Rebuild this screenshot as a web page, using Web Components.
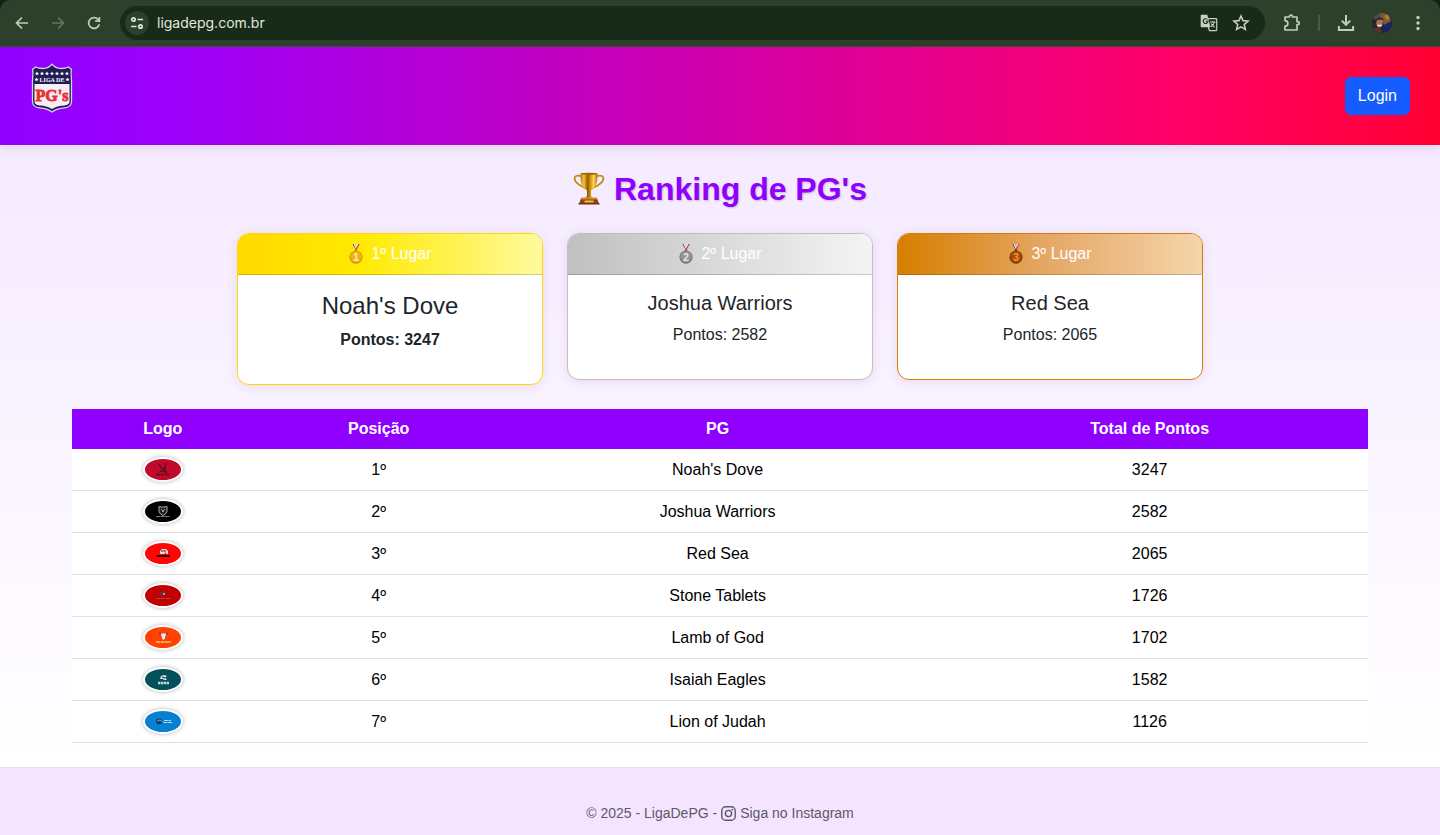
<!DOCTYPE html>
<html lang="pt-BR">
<head>
<meta charset="utf-8">
<title>Liga de PG's</title>
<style>
  html, body { margin: 0; }
  body { font-family: "Liberation Sans", Arial, sans-serif; font-size: 16px; line-height: 24px; color: #212529; }
</style>
</head>
<body>
<liga-app></liga-app>
<script>
const define = (name, html, after) => {
  const tpl = document.createElement('template');
  tpl.innerHTML = html;
  customElements.define(name, class extends HTMLElement {
    connectedCallback() {
      if (this.shadowRoot) return;
      this.attachShadow({ mode: 'open' }).append(tpl.content.cloneNode(true));
      if (after) after(this, this.shadowRoot);
    }
  });
};

/* ---------- browser toolbar ---------- */
define('browser-bar', `
<style>
  :host { display: block; background: #10200f; }
  .bar { display: flex; align-items: center; box-sizing: border-box; height: 47px; padding: 0 4px; background: #2c402b; border-bottom: 1px solid #3c4e3a; border-radius: 10px 10px 0 0; }
  button { display: flex; align-items: center; justify-content: center; flex: none; width: 28px; height: 28px; margin: 0 4px; padding: 0; border: 0; border-radius: 50%; background: none; color: #b9d2b5; }
  button[disabled] { color: #627a60; }
  .pill { display: flex; align-items: center; flex: 1; min-width: 0; height: 34px; margin: 0 9px 0 8px; padding: 0 8px 0 5px; border-radius: 17px; background: #182b19; }
  .pill button { margin: 0 2px; color: #c5cfc2; }
  .pill .site { width: 24px; height: 24px; margin: 0 8px 0 0; background: #2c402b; color: #dce5d9; }
  input { flex: 1; min-width: 0; padding: 0; border: 0; outline: 0; background: none; color: #e2e8df; font: 14px/20px Inter, sans-serif; }
  .rule { width: 2px; height: 16px; margin: 0 8px; background: #465d45; }
  svg { display: block; fill: none; stroke: currentColor; stroke-width: 1.7; }
</style>
<div class="bar">
  <button aria-label="Voltar"><svg width="16" height="16" viewBox="0 0 16 16"><path d="M14 8H3M8 2.5 2.5 8 8 13.5"/></svg></button>
  <button aria-label="Avançar" disabled><svg width="16" height="16" viewBox="0 0 16 16"><path d="M2 8h11M8 2.5 13.5 8 8 13.5"/></svg></button>
  <button aria-label="Recarregar"><svg width="16" height="16" viewBox="0 0 16 16"><path d="M13.3 9.3A5.4 5.4 0 1 1 12 4.3l1.2 1.3"/><path d="M13.4 2v4.1H9.2"/></svg></button>
  <div class="pill">
    <button class="site" aria-label="Informações do site"><svg width="16" height="16" viewBox="0 0 16 16" stroke-width="1.5"><circle cx="4.5" cy="4.5" r="1.7"/><path d="M8.5 4.5h5.500M2 11.5h5.500"/><circle cx="11.5" cy="11.500" r="1.7"/></svg></button>
    <input aria-label="Endereço" value="ligadepg.com.br" spellcheck="false">
    <button aria-label="Traduzir"><svg width="18" height="18" viewBox="0 0 18 18"><path d="M7.500 4.700H16a.7.7 0 0 1 .7.7v10.600a.7.7 0 0 1-.7.7H9.500L8.300 13" stroke-width="1.200"/><path d="M1.500.8h5.800l3.200 12.400H1.500a.8.8 0 0 1-.8-.8V1.600a.8.8 0 0 1 .8-.8z" fill="currentColor" stroke="none"/><path d="M7.300 5.400a2.400 2.400 0 1 0 .7 1.800H5.700" stroke="#182b19" stroke-width="1.100"/><path d="M10 8h5.700M12.800 7v1M14.500 8c-.4 2-1.700 3.500-3.500 4.700M11.300 9.500c.6 1.500 1.800 2.800 3.400 3.700" stroke-width="1.100"/></svg></button>
    <button aria-label="Favoritos"><svg width="18" height="18" viewBox="0 0 16 16"><path stroke-width="1.400" d="m8 1.800 1.800 4.100 4.500.4-3.400 3 1 4.400L8 11.400l-3.900 2.300 1-4.400-3.400-3 4.500-.4z"/></svg></button>
  </div>
  <button aria-label="Extensões"><svg width="20" height="20" viewBox="0 0 20 20"><path d="M3 4h4.500V3.200q0-1.200 1.500-1.200t1.500 1.200V4H15v4.700h.8q1.500 0 1.500 1.500t-1.500 1.500H15V17H3v-3.800c3.800-.2 3.800-5.400 0-5.600z" stroke-linejoin="round"/></svg></button>
  <span class="rule"></span>
  <button aria-label="Downloads"><svg width="18" height="18" viewBox="0 0 18 18"><path d="M9 1v9.500M4.800 6.600 9 10.800l4.200-4.200M1.900 12v4.100h14.200V12" stroke-width="2"/></svg></button>
  <button aria-label="Perfil"><svg width="20" height="20" viewBox="0 0 20 20" stroke="none"><defs><clipPath id="c"><circle cx="10" cy="10" r="10"/></clipPath></defs><g clip-path="url(#c)" stroke="none"><path fill="#29242b" d="M0 0h20v20H0z"/><path fill="#7a5c34" d="M7 0h9l3 8-6 4-5-5z"/><path fill="#454e5c" d="m1 4 5-4 3 3-6 4z"/><ellipse cx="7.500" cy="10" rx="3.200" ry="4.200" fill="#a8705c"/><path fill="#3d2722" d="M4 8c0-4 7-5 7.500-1L7.500 6.500z"/><path d="M5.500 12q2 1.500 4 0" stroke="#f0dcd0"/><path fill="#b8743a" d="m12 3 4-2 2 5-3 1z"/><path fill="#152464" d="m11 14 4-4 5-1v11h-9z"/><path fill="#5c3427" d="m2 15 6-1 2 6H3z"/></g></svg></button>
  <button aria-label="Menu"><svg width="16" height="16" viewBox="0 0 16 16"><g fill="currentColor" stroke="none"><circle cx="8" cy="2.500" r="1.700"/><circle cx="8" cy="8" r="1.700"/><circle cx="8" cy="13.500" r="1.700"/></g></svg></button>
</div>`);

/* ---------- shield logo ---------- */
define('liga-logo', `
<style>:host { display: block; } svg { display: block; }</style>
<svg width="44" height="50" viewBox="-1 0 44 50" role="img" aria-label="Liga de PG's">
  <path fill="#211c55" stroke="#d9cdec" stroke-width="1.300" d="M21 1.200C23 3.800 25.500 5.200 28.500 5.400c3.500.3 6-.1 9-1.400l3 2.500c-1.200 4 .2 8 0 12v20c0 4-2.500 6-7 6.300-5.500.3-8.500 1-12.500 4.200-4-3.200-7-3.900-12.500-4.200-4.500-.3-7-2.300-7-6.300v-20c-.2-4 1.200-8 0-12L4.500 4c3 1.300 5.500 1.700 9 1.400 3-.2 5.500-1.600 7.500-4.200z"/>
  <path fill="#f5eef5" d="M3.500 21h35v17.500c0 2.600-2 3.600-5 3.900-5.500.4-8.500 1-12.500 3.700-4-2.700-7-3.300-12.500-3.700-3-.3-5-1.300-5-3.900z"/>
  <g id="stars" fill="#fff"></g>
  <text x="21" y="18.800" text-anchor="middle" font-family="Liberation Serif, serif" font-weight="700" font-size="6" fill="#fff">LIGA DE</text>
  <text x="21" y="38" text-anchor="middle" font-family="Liberation Serif, serif" font-weight="700" font-size="16" fill="#e8302e" stroke="#e8302e" stroke-width=".8">PG's</text>
</svg>`, (host, root) => {
  const star = (x, y) => `<path d="m${x} ${y - 2} .6 1.300 1.400.1-1 1 .3 1.400-1.300-.7-1.300.7.3-1.400-1-1 1.400-.1z"/>`;
  root.querySelector('#stars').innerHTML =
    [6, 11, 16, 21, 26, 31, 36].map(x => star(x, 10.5)).join('') + star(5.5, 16.5) + star(36.5, 16.5);
});

define('site-header', `
<style>
  :host { display: flex; align-items: center; justify-content: space-between; padding: 16px 30px; position: relative;
    background: linear-gradient(90deg, #9000ff 0%, #9c00fb 12%, #ff0066 82%, #ff0033 100%); box-shadow: 0 4px 8px rgba(0,0,0,.08); }
  .brand { display: block; padding-bottom: 16px; }
  button { padding: 6px 12px; border: 1px solid #145cff; border-radius: 6px; background: #145cff; color: #fff; font: inherit; cursor: pointer; }
</style>
<a class="brand" href="#"><liga-logo></liga-logo></a>
<button type="button">Login</button>`);

/* ---------- trophy and medals ---------- */
define('trophy-icon', `
<style>:host { display: block; } svg { display: block; }</style>
<svg width="32" height="34" viewBox="0 0 32 34" aria-hidden="true">
  <defs>
    <linearGradient id="g"><stop offset="0" stop-color="#b87a05"/><stop offset=".2" stop-color="#f7c531"/><stop offset=".42" stop-color="#8d5d02"/><stop offset=".6" stop-color="#d99a10"/><stop offset=".78" stop-color="#ffd94f"/><stop offset="1" stop-color="#a86f04"/></linearGradient>
  </defs>
  <g fill="none" stroke="#c08b10" stroke-width="1.700"><path d="M9 4.500C4 2.500 1 4 1.700 7.500 2.500 11.500 7 13.500 12 16"/><path d="M23 4.500c5-2 8-.5 7.300 3C29.500 11.500 25 13.500 20 16"/></g>
  <path fill="url(#g)" d="M7.500 1.500h17c.2 9-1.500 14-6.500 17V22c0 2.500 1 3.800 2.500 5h-9c1.500-1.200 2.500-2.500 2.500-5v-3.500C9 15.500 7.300 10.500 7.500 1.500z"/>
  <ellipse cx="16" cy="1.800" rx="8.500" ry="1.100" fill="#9b6a08"/>
  <path fill="#8a4312" d="M8 26h16l2 6H6z"/><path fill="#d9852b" d="M8.500 25.500h15l.5 2H8z"/><path fill="#f3bd45" d="M11.500 28.500h9v2h-9z"/><path fill="#6e300f" d="M5.500 31h21v1.500h-21z"/>
</svg>`);

define('medal-icon', `
<style>
  :host { display: block; --hi: #f2b01e; --lo: #d98a00; --num: #fff3b8; }
  :host([rank="2"]) { --hi: #949494; --lo: #6d6d6d; --num: #e6e6e6; }
  :host([rank="3"]) { --hi: #a34a16; --lo: #7c3305; --num: #ff9c1a; }
  svg { display: block; }
</style>
<svg width="16" height="20" viewBox="0 0 16 20" aria-hidden="true">
  <path fill="#2531b8" d="M4.500 0h2.200L9 5.500H7.500z"/><path fill="#fff" d="M5.600 0h1.200l2 5H7.700z"/><path fill="#e23a3a" d="M11.800 0H9.400L7.300 5.500h1.500z"/><path fill="#fff" d="m9 0-.8 2.500.5 1L10.200 0z"/>
  <circle cx="8" cy="6.300" r="1.300" fill="var(--lo)"/>
  <circle cx="8" cy="13.200" r="6.500" fill="var(--lo)"/><circle cx="8" cy="12.900" r="5.700" fill="var(--hi)"/>
  <text x="8" y="16.500" text-anchor="middle" font-family="Liberation Sans, sans-serif" font-size="10" font-weight="700" fill="var(--num)"></text>
</svg>`, (host, root) => { root.querySelector('text').textContent = host.getAttribute('rank'); });

define('podium-card', `
<style>
  :host { display: block; --edge: #ffd900; --fill: linear-gradient(90deg, #ffd900, #ffea00 40%, #fffa9e); --size: 20px; --line: 24px; --weight: 400;
    overflow: hidden; border: 1px solid var(--edge); border-radius: 12px; background: #fff; box-shadow: 0 2px 12px rgba(80,0,120,.1); text-align: center; }
  :host([rank="1"]) { --size: 24px; --line: 29px; --weight: 700; }
  :host([rank="2"]) { --edge: #c0c0c0; --fill: linear-gradient(90deg, #c0c0c0, #f4f4f4); }
  :host([rank="3"]) { --edge: #d67f00; --fill: linear-gradient(90deg, #d67f00, #e5a867 50%, #f5d5ab); }
  header { display: flex; align-items: center; justify-content: center; gap: 7px; padding: 8px 16px; color: #fff; background: var(--fill); border-bottom: 1px solid rgba(0,0,0,.18); }
  .body { padding: 16px; }
  h2 { margin: 0 0 8px; font-size: var(--size); line-height: var(--line); font-weight: 400; }
  p { margin: 0 0 16px; font-weight: var(--weight); }
</style>
<header><medal-icon></medal-icon><span></span></header>
<div class="body"><h2><slot></slot></h2><p><slot name="points"></slot></p></div>`, (host, root) => {
  const rank = host.getAttribute('rank');
  root.querySelector('header span').textContent = rank + 'º Lugar';
  const medal = document.createElement('medal-icon');
  medal.setAttribute('rank', rank);
  root.querySelector('medal-icon').replaceWith(medal);
});

/* ---------- team badges ---------- */
const ART = {
  dove: ['#bf0a2b', '<path d="m14 5 2 3 1 2M21 4l-1 4-2 2 3-1M15 13l2-2 2 2M20 10l1 3-2-1" stroke="#5d0c1c" stroke-width="1.400"/><path d="M11 15.500h14" stroke="#5d0c1c" stroke-width="1.300" stroke-dasharray="4 .5"/>'],
  joshua: ['#000', '<path d="M14 5.500q4 1.500 8 0v5q-1 3-4 4-3-1-4-4z" fill="#222" stroke="#aaa"/><path d="m16 8 3 3M20 8l-3 3" stroke="#999"/><path d="M11 15.500h14" stroke="#777" stroke-dasharray="4 .5"/>'],
  red: ['#ff0505', '<path d="M15 11V8l2-2h4l2 2v3h-2V9l-2 2z" fill="#f3dada"/><path d="M16 8h5" stroke="#333"/><path d="M11.500 13h13.500" stroke="#3a0000" stroke-width="2"/>'],
  stone: ['#c00003', '<path d="M15 10.500q0-4 4-4 3 1 3 4l-2-2-2 3z" fill="#703030"/><path d="M19 8v2" stroke="#eee"/><path d="M11 13.500h15" stroke="#a45525" stroke-dasharray="4 .7"/>'],
  lamb: ['#ff4203', '<path d="M15.500 6.500h6l-1 2-.5 3-1.500 1.500-1.500-1.500-.5-3z" fill="#e8edf0"/><path d="M14 6.500h2M21 6.500h2" stroke="#43505d" stroke-width="1.500"/><path d="M11 15H26" stroke="#ffc36c" stroke-width="1.300" stroke-dasharray="4 .5"/>'],
  eagle: ['#03505a', '<path d="m15 10 1-3 3-1 3 1-2 1.500 2 2.500h-3l-1-1z" fill="#d5e2e4"/><path d="m17 8 3 1" stroke="#10252a"/><path d="M13 14h11" stroke="#b9dcdf" stroke-width="2.500" stroke-dasharray="2.500 .5"/>'],
  lion: ['#0681d1', '<circle cx="14" cy="10.500" r="3" fill="#123f75"/><path d="m12 10 3-1 2 2" stroke="#62a9df"/><path d="M19 9.500h7M18.500 11.500h9" stroke="#b5dcf4" stroke-dasharray="4 .5"/>']
};
define('team-badge', `
<style>
  :host { display: inline-block; vertical-align: middle; width: 36px; height: 21px; border: 2px solid #fff; border-radius: 50%; overflow: hidden; box-shadow: 0 0 4px rgba(0,0,0,.3); }
  svg { display: block; width: 100%; height: 100%; }
</style>
<svg viewBox="0 0 36 21" role="img" fill="none"></svg>`, (host, root) => {
  const [colour, art] = ART[host.getAttribute('team')];
  host.style.background = colour;
  root.querySelector('svg').innerHTML = art;
});

define('ranking-table', `
<style>
  :host { display: block; }
  table { width: 100%; border-collapse: separate; border-spacing: 0; background: #fff; color: #000; text-align: center; }
  th, td { padding: 8px; }
  th { background: #9000ff; color: #fff; font-weight: 700; }
  td { border-bottom: 1px solid #dee2e6; }
  td:first-child { line-height: 0; }
</style>
<table>
  <thead><tr><th scope="col">Logo</th><th scope="col">Posição</th><th scope="col">PG</th><th scope="col">Total de Pontos</th></tr></thead>
  <tbody></tbody>
</table>`, (host, root) => {
  const teams = [['dove', "Noah's Dove", 3247], ['joshua', 'Joshua Warriors', 2582], ['red', 'Red Sea', 2065], ['stone', 'Stone Tablets', 1726], ['lamb', 'Lamb of God', 1702], ['eagle', 'Isaiah Eagles', 1582], ['lion', 'Lion of Judah', 1126]];
  root.querySelector('tbody').innerHTML = teams.map(([id, name, pts], i) =>
    `<tr><td><team-badge team="${id}"></team-badge></td><td>${i + 1}º</td><td>${name}</td><td>${pts}</td></tr>`).join('');
});

define('site-footer', `
<style>
  :host { display: flex; justify-content: center; flex: 1; padding: 35px 16px 12px; border-top: 1px solid #dee2e6; background: #f4e4ff; color: #5c5965; font-size: 14px; line-height: 20px; }
  p { display: flex; align-items: center; gap: 4px; margin: 0; }
  a { display: flex; align-items: center; gap: 4px; color: inherit; text-decoration: none; }
  svg { display: block; fill: none; stroke: currentColor; stroke-width: 1.400; }
</style>
<p><span>© 2025 - LigaDePG -</span>
<a href="#"><svg width="15" height="15" viewBox="0 0 15 15" aria-hidden="true"><rect x=".8" y=".8" width="13.400" height="13.400" rx="3.800"/><circle cx="7.500" cy="7.500" r="3.100"/><circle cx="11.400" cy="3.600" r=".9" fill="currentColor" stroke="none"/></svg><span>Siga no Instagram</span></a></p>`);

define('liga-app', `
<style>
  :host { display: flex; flex-direction: column; min-height: 100vh; }
  main { padding: 24px 72px; background: linear-gradient(#f5eaff, #fff); }
  h1 { display: flex; align-items: center; justify-content: center; gap: 9px; margin: 0 0 24px; font-size: 32px; line-height: 40px; font-weight: 700; color: #9000ff; text-shadow: 1px 1px 2px rgba(0,0,0,.2); }
  .podium { display: grid; grid-template-columns: repeat(3, 1fr); align-items: start; gap: 24px; max-width: 966px; margin: 0 auto 24px; }
</style>
<browser-bar></browser-bar>
<site-header></site-header>
<main>
  <h1><trophy-icon></trophy-icon><span>Ranking de PG's</span></h1>
  <section class="podium">
    <podium-card rank="1">Noah's Dove<span slot="points">Pontos: 3247</span></podium-card>
    <podium-card rank="2">Joshua Warriors<span slot="points">Pontos: 2582</span></podium-card>
    <podium-card rank="3">Red Sea<span slot="points">Pontos: 2065</span></podium-card>
  </section>
  <ranking-table></ranking-table>
</main>
<site-footer></site-footer>`);
</script>
</body>
</html>
